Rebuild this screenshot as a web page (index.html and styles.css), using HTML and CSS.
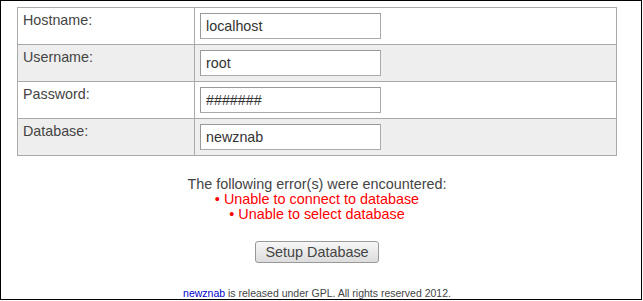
FILE: index.html
```html
<!DOCTYPE html>
<html>
<head>
<meta charset="utf-8">
<link rel="stylesheet" href="styles.css">
</head>
<body>
<div class="frame">
  <div class="content">
    <table class="form">
      <tr>
        <td class="label">Hostname:</td>
        <td class="field"><input class="text" type="text" value="localhost"></td>
      </tr>
      <tr class="alt">
        <td class="label">Username:</td>
        <td class="field"><input class="text" type="text" value="root"></td>
      </tr>
      <tr>
        <td class="label">Password:</td>
        <td class="field"><input class="text" type="text" value="#######"></td>
      </tr>
      <tr class="alt">
        <td class="label">Database:</td>
        <td class="field"><input class="text" type="text" value="newznab"></td>
      </tr>
    </table>
    <div class="errors">
      <div class="heading">The following error(s) were encountered:</div>
      <div class="error">&bull; Unable to connect to database</div>
      <div class="error">&bull; Unable to select database</div>
    </div>
    <div class="actions">
      <button class="button" type="button">Setup Database</button>
    </div>
    <div class="footer"><a href="#">newznab</a> is released under GPL. All rights reserved 2012.</div>
  </div>
</div>
</body>
</html>
```
FILE: styles.css
```css
html, body {
  margin: 0;
  padding: 0;
  background: #fff;
}
body {
  font-family: "Liberation Sans", Arial, sans-serif;
  color: #444;
}
.frame {
  box-sizing: border-box;
  width: 642px;
  height: 300px;
  border: 1px solid #000;
  overflow: hidden;
}
.content {
  width: 600px;
  margin: 6px 0 0 16px;
}
.form {
  width: 600px;
  border-collapse: collapse;
  border: 1px solid #aaa;
}
.form td {
  border: 1px solid #aaa;
  height: 37px;
  box-sizing: border-box;
  padding: 0;
}
.alt td {
  background: #eee;
}
.label {
  width: 177px;
  vertical-align: top;
  font-size: 14.3px;
  line-height: 16px;
  padding: 4px 5px 0 5px !important;
}
.field {
  vertical-align: middle;
  padding: 0 5px !important;
}
.text {
  display: block;
  box-sizing: border-box;
  width: 181px;
  height: 26px;
  margin: 0;
  padding: 0 5px;
  border: 1px solid #aaa;
  border-top-color: #999;
  border-left-color: #999;
  background: #fff;
  font-family: "Liberation Sans", Arial, sans-serif;
  font-size: 14.3px;
  color: #333;
  outline: none;
}
.errors {
  margin-top: 21px;
  text-align: center;
  font-size: 14.4px;
  line-height: 15px;
}
.error {
  color: #f00;
}
.actions {
  margin-top: 19px;
  text-align: center;
}
.button {
  box-sizing: border-box;
  width: 124px;
  height: 22px;
  padding: 0;
  border: 1px solid #999;
  border-radius: 3px;
  background: linear-gradient(#f7f7f7, #dcdcdc);
  font-family: "Liberation Sans", Arial, sans-serif;
  font-size: 14.4px;
  color: #444;
}
.footer {
  margin-top: 24px;
  text-align: center;
  font-size: 10.5px;
  line-height: 13px;
  color: #444;
}
.footer a {
  color: #00c;
  text-decoration: none;
}
```
